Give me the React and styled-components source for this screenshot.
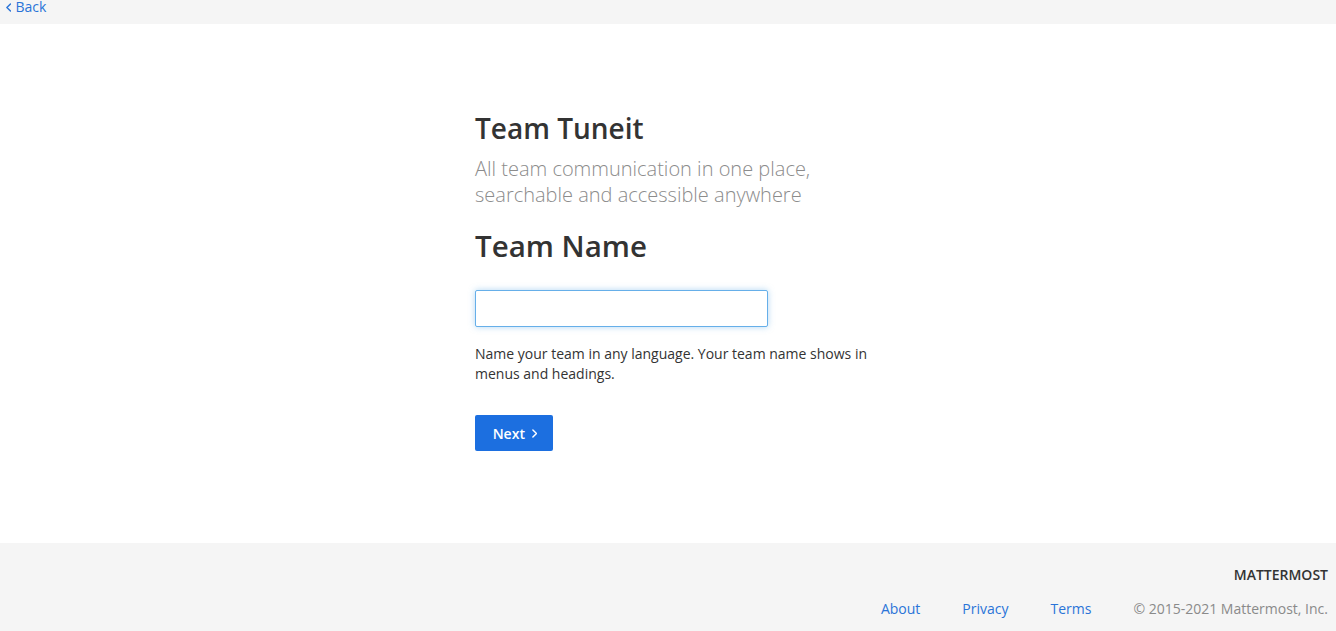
import React from "react";
import styled, { createGlobalStyle } from "styled-components";

const GlobalStyle = createGlobalStyle`
  html, body {
    margin: 0;
    padding: 0;
    height: 100%;
    background: #ffffff;
    font-family: "Open Sans", "Noto Sans", sans-serif;
    color: #333333;
  }
  * {
    box-sizing: border-box;
  }
`;

const Page = styled.div`
  display: flex;
  flex-direction: column;
  height: 631px;
`;

const TopBar = styled.div`
  height: 24px;
  background: #f5f5f5;
  padding-left: 6px;
  display: flex;
  align-items: flex-start;
`;

const BackLink = styled.a`
  color: #2a74d8;
  font-size: 14px;
  line-height: 14px;
  text-decoration: none;
  display: flex;
  align-items: center;
  gap: 4px;
  cursor: pointer;
`;

const Main = styled.main`
  flex: 1;
  background: #ffffff;
  padding-top: 86px;
`;

const Container = styled.div`
  width: 400px;
  margin: 0 auto;
  padding-left: 7px;
`;

const Title = styled.h1`
  margin: 0;
  font-size: 28px;
  line-height: 36px;
  font-weight: 600;
  color: #333333;
`;

const Subtitle = styled.h3`
  margin: 10px 0 0;
  font-size: 20px;
  line-height: 26px;
  font-weight: 300;
  color: #8c8c8c;
`;

const FieldLabel = styled.h2`
  margin: 20px 0 0;
  font-size: 29.5px;
  line-height: 36px;
  font-weight: 600;
  color: #333333;
`;

const Input = styled.input`
  display: block;
  margin-top: 26px;
  width: 293px;
  height: 37px;
  border: 1px solid #66afe9;
  border-radius: 2px;
  outline: none;
  box-shadow: 0 0 6px rgba(102, 175, 233, 0.5);
  font-family: inherit;
  font-size: 14px;
  padding: 6px 12px;
`;

const Help = styled.p`
  margin: 17px 0 0;
  font-size: 14px;
  line-height: 20px;
  color: #333333;
`;

const NextButton = styled.button`
  margin-top: 31px;
  width: 78px;
  height: 36px;
  border: none;
  border-radius: 2px;
  background: #1c6fe0;
  color: #ffffff;
  font-family: inherit;
  font-size: 14px;
  font-weight: 600;
  display: flex;
  align-items: center;
  justify-content: center;
  gap: 7px;
  padding: 0 0 0 2px;
  cursor: pointer;
`;

const Footer = styled.footer`
  height: 88px;
  background: #f5f5f5;
  padding: 22px 8px 0;
  display: flex;
  flex-direction: column;
  align-items: flex-end;
`;

const Brand = styled.div`
  font-size: 14px;
  line-height: 20px;
  font-weight: 600;
  color: #333333;
`;

const FooterRow = styled.div`
  margin-top: 14px;
  display: flex;
  gap: 42px;
  font-size: 14px;
  line-height: 20px;
`;

const FooterLink = styled.a`
  color: #2a74d8;
  text-decoration: none;
`;

const Copyright = styled.span`
  color: #8a8a8a;
`;

const Chevron = ({ size = 8, dir = "right" }) => (
  <svg width={size * 0.6} height={size} viewBox="0 0 6 10" fill="none">
    <path
      d={dir === "right" ? "M1 1l4 4-4 4" : "M5 1L1 5l4 4"}
      stroke="currentColor"
      strokeWidth="1.6"
      strokeLinecap="round"
      strokeLinejoin="round"
    />
  </svg>
);

const App = () => {
  return (
    <Page>
      <GlobalStyle />
      <TopBar>
        <BackLink>
          <Chevron size={9} dir="left" />
          Back
        </BackLink>
      </TopBar>
      <Main>
        <Container>
          <Title>Team Tuneit</Title>
          <Subtitle>
            All team communication in one place,
            <br />
            searchable and accessible anywhere
          </Subtitle>
          <FieldLabel>Team Name</FieldLabel>
          <Input type="text" autoFocus />
          <Help>
            Name your team in any language. Your team name shows in menus and
            headings.
          </Help>
          <NextButton>
            Next
            <Chevron size={9} />
          </NextButton>
        </Container>
      </Main>
      <Footer>
        <Brand>MATTERMOST</Brand>
        <FooterRow>
          <FooterLink>About</FooterLink>
          <FooterLink>Privacy</FooterLink>
          <FooterLink>Terms</FooterLink>
          <Copyright>© 2015-2021 Mattermost, Inc.</Copyright>
        </FooterRow>
      </Footer>
    </Page>
  );
};

export default App;
